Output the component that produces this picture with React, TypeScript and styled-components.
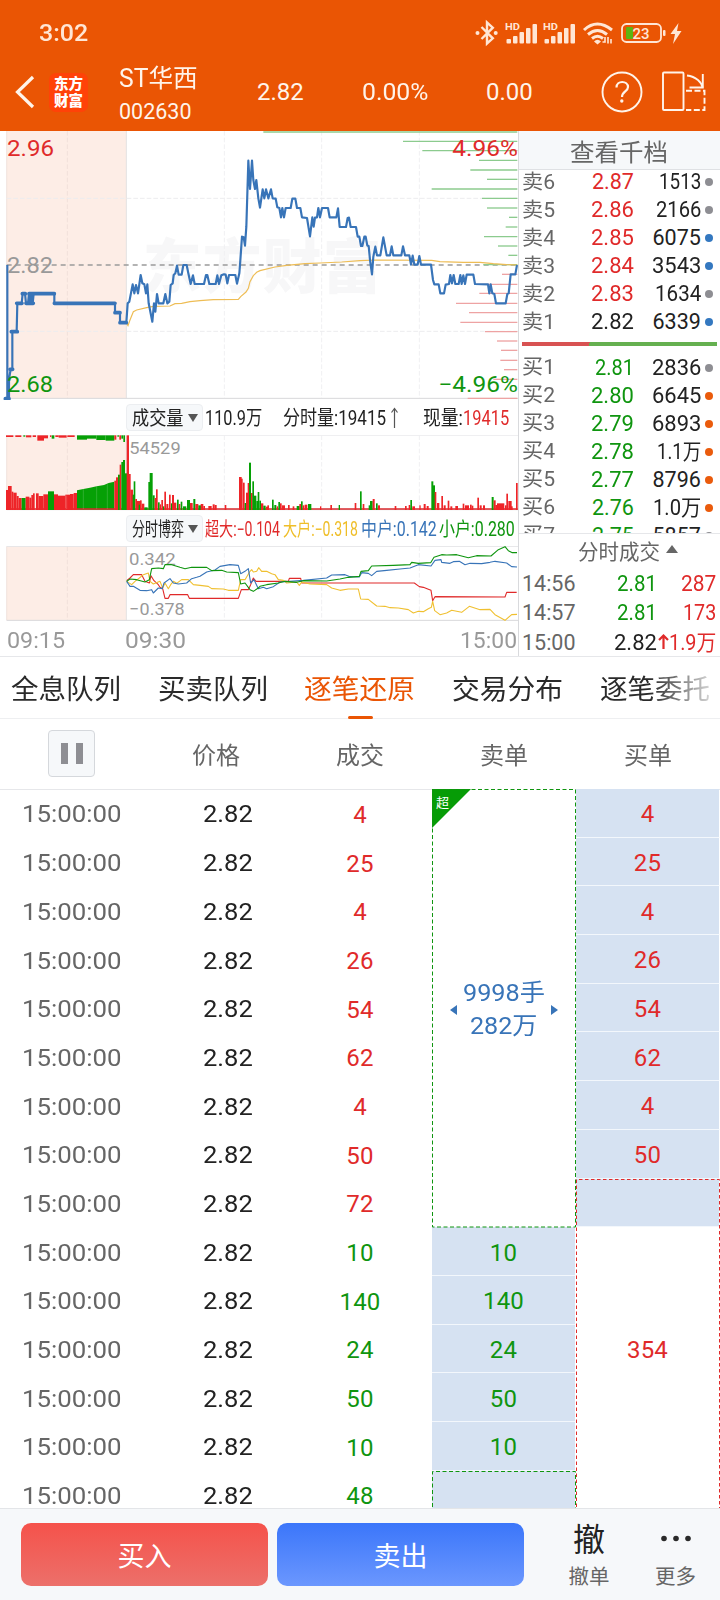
import React, { useLayoutEffect, useRef, useState } from "react";
import styled, { createGlobalStyle } from "styled-components";

const C = {
  orange: "#ea5504",
  red: "#e02a2a",
  green: "#0f950f",
  blue: "#3874b8",
  yellow: "#f0c030",
  ink: "#222222",
  grey: "#666666",
  faint: "#999999",
  line: "#e6e7ea",
  panel: "#f6f8fa",
  cell: "#d6e2f2",
};
const FONT = '"Roboto", "Noto Sans CJK SC", sans-serif';

const Global = createGlobalStyle`
  * { box-sizing: border-box; }
  body { margin: 0; background: #fff; font-family: ${FONT}; color: ${C.ink}; }
`;

/* Text squeezed or stretched horizontally to a given width */
const FitBox = styled.span<{ $w: number; $size: number; $color?: string; $weight?: number; $dy?: number }>`
  display: block;
  flex: none;
  width: ${(p) => p.$w}px;
  font-size: ${(p) => p.$size}px;
  line-height: 1.2;
  height: 1.2em;
  white-space: nowrap;
  font-weight: ${(p) => p.$weight ?? 400};
  transform: translateY(${(p) => p.$dy ?? 0}px);
  ${(p) => (p.$color ? `color: ${p.$color};` : "")}
`;
const FitInner = styled.span`
  display: inline-block;
  transform-origin: 0 50%;
`;
type FitProps = { w: number; size: number; color?: string; weight?: number; dy?: number; children: React.ReactNode };
function Fit(props: FitProps) {
  const ref = useRef<HTMLSpanElement>(null);
  const [k, setK] = useState(1);
  useLayoutEffect(() => {
    if (ref.current) setK(props.w / ref.current.offsetWidth);
  }, [props.w]);
  return (
    <FitBox $w={props.w} $size={props.size} $color={props.color} $weight={props.weight} $dy={props.dy}>
      <FitInner ref={ref} style={{ transform: `scaleX(${k})` }}>
        {props.children}
      </FitInner>
    </FitBox>
  );
}

const Screen = styled.div`
  width: 720px;
  height: 1600px;
  overflow: hidden;
  display: flex;
  flex-direction: column;
  background: #fff;
`;

/* ---------- header ---------- */
const Top = styled.header`
  flex: none;
  height: 131px;
  background: ${C.orange};
  color: #fff4ea;
`;
const StatusBar = styled.div`
  height: 66px;
  padding: 0 36px 0 39px;
  display: flex;
  align-items: center;
  justify-content: space-between;
  color: #ffe6d5;
`;
const NavBar = styled.div`
  height: 52px;
  display: flex;
  align-items: center;
`;
const BackIcon = styled.svg`
  margin-left: 14px;
  flex: none;
`;
const Logo = styled.div`
  flex: none;
  width: 39px;
  height: 39px;
  margin: 0 31px 0 14px;
  border-radius: 7px;
  background: #ff4208;
  color: #fff;
  font: 900 14.5px/17px "Noto Sans CJK SC", sans-serif;
  text-align: center;
  padding-top: 1px;
`;
const Stock = styled.div`
  width: 138px;
  display: flex;
  flex-direction: column;
  gap: 5px;
  padding-top: 5px;
`;
const Quote = styled.div<{ $w: number }>`
  width: ${(p) => p.$w}px;
  padding-top: 1px;
`;

const Signal = ({ x }: { x: number }) => (
  <g transform={`translate(${x} 0)`}>
    <text x="-0.5" y="11" fontSize="9.5" fontWeight="700" textLength="15" lengthAdjust="spacingAndGlyphs">HD</text>
    {[[1, 20], [7.5, 17], [14, 13], [20.5, 9], [27, 5]].map(([bx, by]) => (
      <rect key={bx} x={bx} y={by} width="4.500" height={24.5 - by} rx="1" />
    ))}
  </g>
);
const StatusIcons = () => (
  <svg width="209" height="28" viewBox="0 0 209 28" fill="#ffe6d5" stroke="none">
    <path d="M6.500 8 L17.800 19.300 L12 24.500 V3.500 L17.800 8.700 L6.500 20" fill="none" stroke="#ffe6d5" strokeWidth="2.400" />
    <circle cx="2.500" cy="14" r="2" /><circle cx="20.700" cy="14" r="2" />
    <Signal x={30.5} /><Signal x={68.5} />
    <g fill="none" stroke="#ffe6d5" strokeWidth="3">
      <path d="M109 11 Q122 -1 137 11" /><path d="M113 15.500 Q122.500 7.500 132 15.500" /><path d="M117 19.500 Q122.500 15 128 19.500" />
    </g>
    <path d="M119 22.500 Q122.500 19 126 22.500 L122.500 25.500Z" />
    <path d="M127.500 23H130V18M133 18V24.500M136 20V24.500" stroke="#ffe6d5" strokeWidth="1.6" fill="none" />
    <rect x="147" y="5" width="39" height="18" rx="4.500" fill="none" stroke="#ffe6d5" strokeWidth="1.8" />
    <rect x="151" y="8" width="7" height="12" rx="1" fill="#5cb512" />
    <rect x="188" y="11" width="2.500" height="6" rx="1" />
    <text x="157.500" y="19.500" fontSize="15" fontWeight="500" textLength="17" lengthAdjust="spacingAndGlyphs">23</text>
    <path d="M203.500 4 L195.500 15 H200 L198 25 L206.500 12 H202Z" />
  </svg>
);
const NavIcons = () => (
  <svg width="110" height="44" viewBox="0 0 110 44" fill="none" stroke="#fff4ea" strokeWidth="1.9">
    <circle cx="22" cy="22" r="19.500" />
    <path d="M16.500 17.500c0-7.500 11.500-7 11.500-.5c0 4.500-6 4.500-6 10" strokeWidth="2.200" />
    <circle cx="21.800" cy="31" r="1.700" fill="#fff4ea" stroke="none" />
    <rect x="63" y="2.500" width="20.500" height="37.500" rx="1" />
    <path d="M87 5.500c9 1 15 7 15.500 12" /><path d="M102.800 4V17.500H89.500" />
    <path d="M86 20.700H104.500V40H86" strokeDasharray="6 2.500" />
  </svg>
);

/* ---------- market area ---------- */
const Market = styled.section`
  flex: none;
  height: 526px;
  display: flex;
  border-bottom: 1px solid ${C.line};
`;
const Charts = styled.div`
  width: 518px;
  display: flex;
  flex-direction: column;
`;
const Plot = styled.svg`
  display: block;
  flex: none;
`;
const ToolRow = styled.div<{ $h: number }>`
  height: ${(p) => p.$h}px;
  flex: none;
  padding-left: 126px;
  display: flex;
  align-items: center;
`;
const Picker = styled.div`
  flex: none;
  width: 77px;
  height: 27px;
  padding: 0 4px 0 5px;
  margin-right: 2px;
  display: flex;
  align-items: center;
  justify-content: space-between;
  background: ${C.panel};
  border: 1px solid #eceef1;
  border-radius: 4px;
`;
const Caret = styled.i<{ $up?: boolean }>`
  flex: none;
  border: 5px solid transparent;
  ${(p) => (p.$up ? `border-width: 0 6.5px 8px; border-bottom-color: #666; margin-top: -5px;` : `border-width: 8px 5px 0; border-top-color: #555;`)}
`;
const Gap = styled.span<{ $w: number }>`
  width: ${(p) => p.$w}px;
  flex: none;
`;
const TimeAxis = styled.div`
  flex: 1;
  display: flex;
  align-items: center;
  padding: 3px 1px 0 7px;
`;

const shift = (pts: number[]) => pts.map((v, i) => (i % 2 ? v : v + 780));

const preLine = [22,405,22,806,27,806,27,748,32,718,37,718,37,605,50,605,52,520,65,520,68,491,75,491,78,520,84,520,87,491,90,520,95,491,98,520,101,491,163,491,163,520,345,520,345,548,360,548,360,578,379,578];
const priceLine = [379,578,383,520,388,515,398,463,403,490,408,465,414,490,422,435,427,460,433,463,438,490,442,463,446,520,457,575,462,520,466,545,471,492,476,520,490,520,496,492,502,520,508,515,512,465,518,460,521,435,526,430,531,407,536,434,545,434,550,405,560,405,565,430,572,462,579,436,584,462,612,462,618,435,622,435,628,462,647,462,652,436,657,462,664,436,672,433,677,434,682,460,687,435,706,435,711,461,718,430,720,405,726,320,731,322,735,347,739,290,745,92,750,177,756,92,760,150,765,177,769,150,775,205,780,233,
  ...shift([8,178,13,205,18,178,25,205,33,178,38,205,47,206,52,232,58,234,63,262,67,234,72,262,77,234,92,234,97,206,106,206,111,234,121,234,126,262,141,264,150,319,157,262,161,290,165,263,171,262,175,234,180,262,186,234,204,234,209,262,229,262,234,235,239,291,258,291,263,264,267,263,272,291,288,291,293,320,298,320,303,348,307,348,313,320,317,320,322,347,326,348,330,390,336,433,340,380,346,350,351,376,361,376,370,322,380,376,390,376,395,349,400,376,424,376,429,349,435,376,448,376,453,404,458,377,463,404,473,404,478,378,483,404,513,404,519,450,523,463,536,463,541,490,552,490,557,464,567,462,571,435,576,460,581,435,586,462,596,462,601,435,605,462,610,436,615,462,620,434,640,434,645,462,684,463,688,490,692,463,697,490,703,492,708,520,737,520,742,492,746,490,752,433,766,433,771,405])];
const avgLine = [379,578,384,587,390,570,400,545,410,540,440,533,460,529,510,528,525,521,545,520,570,515,600,512,640,509,715,508,722,500,738,486,745,475,750,455,760,437,770,427,780,422,
  ...shift([45,411,80,406,135,401,180,399,245,396,300,392,350,390,515,391,540,395,610,397,660,397,700,401,740,404,772,405])];
const askDepth = [[6,10],[34,429],[62,487],[91,657],[120,631],[148,681],[177,515],[205,666],[234,681],[262,747],[291,737],[320,672],[348,714],[376,745],[404,670]];
const bidDepth = [[433,726],[463,650],[490,658],[520,588],[548,627],[577,601],[605,675],[633,711],[661,723],[691,721],[719,732],[748,700],[805,623]];

const Grid = ({ top, bottom }: { top: number; bottom: number }) => (
  <g>
    <rect x="20" y={top} width="359" height={bottom - top} fill="#fdede6" />
    <g stroke="#e9e9eb" strokeWidth="3" strokeDasharray="14 6">
      <path d={`M202 ${top}V${bottom}`} stroke="#f1e0da" />
      <path d={`M673 ${top}V${bottom}M965 ${top}V${bottom}M1258 ${top}V${bottom}`} stroke="#f0f0f2" />
    </g>
    <path d={`M379 ${top}V${bottom}`} stroke="#e4e2e2" strokeWidth="3" />
    <path d={`M20 ${top}V${bottom}`} stroke="#ead9d3" strokeWidth="2" />
    <path d={`M20 ${bottom}H1554`} stroke="#d8d8da" strokeWidth="3" />
  </g>
);

type LabelProps = { x: number; y: number; w: number; size: number; fill: string; children: string };
const Label = ({ x, y, w, size, fill, children }: LabelProps) => (
  <text x={x} y={y} textLength={w} lengthAdjust="spacingAndGlyphs" fontSize={size} fill={fill}>{children}</text>
);

const PriceChart = () => (
  <Plot width="518" height="269" viewBox="0 3 1554 807">
    <text x="428" y="475" fontSize="176" fontWeight="900" fill="#f7f7f8" textLength="716">东方财富</text>
    <Grid top={3} bottom={805} />
    <path d="M20 205H1554M20 604H1554" stroke="#ececee" strokeWidth="3" strokeDasharray="14 6" />
    <path d="M20 405H1554" stroke="#9b9b9b" strokeWidth="4" strokeDasharray="15 12" />
    {askDepth.map(([y, x]) => <path key={y} d={`M${x + 780} ${y}H1552`} stroke="#8ccb8e" strokeWidth="4" />)}
    {bidDepth.map(([y, x]) => <path key={y} d={`M${x + 780} ${y}H1552`} stroke="#eea3a3" strokeWidth="4" />)}
    <polyline points={avgLine.join(" ")} fill="none" stroke="#eebd55" strokeWidth="3.500" />
    <polyline points={preLine.join(" ")} fill="none" stroke={C.blue} strokeWidth="6.500" />
    <path d="M101 491H163M163 520H345M345 548H360M360 578H379M16 806H27M34 605H52M50 520H66M67 491H76M78 520H100M87 491H102M30 718H38" stroke={C.blue} strokeWidth="11" strokeLinecap="round" />
    <polyline points={priceLine.join(" ")} fill="none" stroke={C.blue} strokeWidth="6.500" strokeLinejoin="round" />
    <Label x={21} y={77} w={141} size={66} fill={C.red}>2.96</Label>
    <Label x={21} y={430} w={138} size={66} fill={C.faint}>2.82</Label>
    <Label x={21} y={785} w={138} size={66} fill={C.green}>2.68</Label>
    <Label x={1357} y={77} w={197} size={66} fill={C.red}>4.96%</Label>
    <Label x={1315} y={785} w={239} size={66} fill={C.green}>−4.96%</Label>
  </Plot>
);

/* Volume bars: x, width, top (baseline 335), colour */
type Bar = [number, number, number, "r" | "g"];
const volBars: Bar[] = [
  [18,6,276,"r"],[24,11,264,"r"],[35,5,281,"r"],[40,10,284,"r"],[50,6,294,"r"],[56,9,300,"r"],[65,12,300,"g"],[77,11,296,"r"],[88,6,299,"r"],[94,5,291,"r"],[99,5,286,"r"],
  [108,8,286,"r"],[116,14,294,"r"],[130,14,289,"r"],[144,18,280,"g"],[162,12,289,"r"],[174,22,293,"r"],[196,14,290,"r"],[210,11,288,"r"],[221,10,285,"r"],
  [343,5,248,"r"],[348,6,238,"r"],[354,6,230,"g"],[359,5,200,"r"],[364,5,192,"g"],[369,6,186,"g"],[375,6,226,"g"],[380,7,112,"r"],[387,5,228,"r"],
  [391,8,275,"r"],[398,4,290,"g"],[401,5,250,"g"],[406,5,303,"r"],[410,10,309,"r"],[416,5,320,"g"],[420,5,307,"r"],[425,8,317,"r"],[433,10,328,"g"],
  [445,6,252,"g"],[449,9,225,"g"],[458,6,292,"g"],[464,5,300,"r"],[468,5,274,"r"],[474,5,313,"g"],[479,4,319,"r"],[484,5,306,"r"],[489,4,325,"g"],[493,5,281,"r"],[499,6,318,"r"],[507,5,290,"r"],[513,5,316,"g"],[516,6,291,"r"],[522,7,314,"r"],[531,5,305,"g"],[536,5,318,"r"],[542,5,311,"g"],[549,10,325,"g"],[561,9,306,"g"],[570,8,315,"r"],[580,6,303,"g"],[586,9,318,"r"],[595,9,322,"g"],[602,8,318,"r"],[610,5,324,"r"],[625,10,324,"r"],[638,6,319,"r"],[644,6,321,"r"],[674,5,321,"r"],
  [717,8,237,"r"],[723,5,242,"r"],[729,5,254,"r"],[734,5,315,"g"],[738,6,284,"r"],[743,5,255,"r"],[747,6,194,"g"],[753,5,285,"r"],[757,5,250,"g"],[762,7,293,"g"],[769,5,309,"g"],[773,5,282,"g"],[778,5,308,"g"],[783,7,316,"r"],[790,7,323,"g"],[798,6,326,"r"],
  [802,5,322,"r"],[816,5,305,"g"],[823,6,321,"g"],[830,4,325,"r"],[835,5,312,"g"],[840,5,316,"r"],[846,9,322,"r"],[864,5,321,"r"],[878,5,325,"r"],[890,9,324,"g"],[898,5,318,"r"],[903,5,310,"g"],[908,5,322,"r"],[914,8,320,"r"],[924,10,318,"g"],[960,4,325,"r"],[991,5,321,"r"],[1016,4,321,"g"],
  [1064,5,315,"r"],[1080,5,280,"g"],[1088,5,318,"r"],[1106,6,322,"g"],[1110,8,309,"g"],[1118,6,303,"r"],[1128,5,316,"g"],[1134,6,322,"r"],[1184,5,324,"r"],[1215,5,324,"r"],[1226,5,321,"r"],[1231,5,306,"g"],[1237,8,325,"r"],
  [1258,4,322,"r"],[1271,6,318,"r"],[1280,6,324,"r"],[1294,6,250,"g"],[1299,6,262,"g"],[1304,5,282,"r"],[1311,7,315,"r"],[1324,5,294,"r"],[1331,6,322,"r"],[1343,5,308,"r"],[1351,6,325,"r"],[1366,8,324,"r"],[1388,5,317,"r"],[1395,12,322,"r"],[1410,5,320,"r"],[1415,5,323,"r"],[1432,5,299,"r"],[1439,6,322,"r"],[1449,6,322,"r"],[1475,6,297,"g"],[1481,6,307,"r"],[1486,10,321,"r"],[1491,22,316,"r"],[1515,5,322,"r"],[1519,5,287,"r"],[1525,10,309,"r"],[1533,5,325,"r"],[1548,5,255,"r"],
];
const hangBars: Bar[] = [
  [18,22,117,"r"],[46,18,117,"r"],[70,6,116,"g"],[78,16,118,"r"],[98,10,117,"r"],[112,20,128,"r"],[132,12,121,"r"],[150,4,117,"r"],[155,8,122,"g"],[166,10,117,"r"],[176,24,119,"r"],[202,22,117,"r"],[231,30,125,"g"],[261,28,122,"g"],[289,28,126,"g"],[317,26,128,"g"],[343,6,125,"r"],[352,5,116,"g"],[358,5,125,"r"],[364,5,122,"g"],[370,5,132,"g"],
];
const barFill = { r: "#ee2428", g: "#06a006" };

const VolumeChart = () => (
  <Plot width="518" height="76" viewBox="0 111 1554 228">
    <Grid top={112} bottom={335} />
    <path d="M20 112H1554" stroke="#ececee" strokeWidth="3" />
    {hangBars.map(([x, w, y, c]) => <rect key={x} x={x} y={112} width={w} height={y - 112} fill={barFill[c]} />)}
    <polygon points="231,335 231,277 250,273 270,269 290,265 312,261 326,255 343,251 343,335" fill={barFill.g} />
    <path d="M20 333H1553" stroke="#d8282c" strokeWidth="5" />
    {volBars.map(([x, w, y, c]) => <rect key={x} x={x} y={y} width={w} height={336 - y} fill={barFill[c]} />)}
    <path d="M250 273V333M290 265V333M322 259V333M200 292V333" stroke="#fff" strokeOpacity=".25" strokeWidth="2" />
    <Label x={388} y={168} w={154} size={51} fill={C.faint}>54529</Label>
  </Plot>
);

const flowLines: [string, number[]][] = [
  [C.red, [380,548,390,540,400,530,425,530,435,550,448,555,453,533,462,548,475,560,480,568,488,572,495,601,505,601,510,590,563,590,568,601,715,601,724,575,745,575,752,560,760,540,768,550,...shift([0,550,85,550,88,541,122,541,125,555,463,555,478,566,490,568,505,574,513,577,518,608,525,596,735,597,740,583,770,583])]],
  [C.yellow, [380,550,395,560,405,550,418,540,430,530,445,525,450,550,460,558,480,550,488,570,495,555,505,572,512,560,520,550,530,556,545,545,565,545,580,560,600,562,625,565,635,572,670,573,685,577,715,577,722,545,735,545,750,520,755,515,760,522,770,520,776,509,...shift([5,520,20,520,35,527,45,530,55,545,70,547,80,555,110,552,118,562,125,552,150,558,200,560,215,570,240,577,265,573,295,573,302,603,325,604,350,624,375,625,390,629,415,630,445,635,460,645,475,640,490,641,505,632,514,628,518,610,524,638,540,650,560,645,575,637,605,643,628,625,660,635,690,634,705,650,735,667,755,650,771,649])]],
  [C.blue, [380,550,390,565,400,565,420,577,440,578,455,575,460,585,475,570,487,572,492,555,510,542,520,555,535,558,560,555,575,542,590,538,600,535,620,522,645,516,660,505,690,500,715,502,722,527,735,520,745,512,752,555,762,545,775,572,...shift([10,568,20,572,40,566,60,552,90,550,130,547,200,540,215,531,255,530,270,536,298,537,305,524,325,526,335,533,350,520,380,517,420,513,450,510,475,500,513,504,525,487,543,485,545,493,570,496,580,491,598,490,615,500,630,496,665,497,690,493,705,490,740,495,755,506,771,507])]],
  [C.green, [380,550,390,543,410,545,435,552,448,545,455,512,475,510,490,512,495,500,515,500,540,508,555,512,575,508,620,508,635,518,665,517,680,522,715,524,722,558,735,555,750,575,760,580,775,570,...shift([0,565,20,560,55,555,75,550,110,553,130,548,200,549,240,543,265,538,298,535,303,520,325,518,335,504,400,502,450,500,455,493,475,496,512,494,522,478,545,470,560,471,590,470,625,479,650,473,693,474,715,455,735,446,745,458,757,464,771,464])]],
];
const FlowChart = () => (
  <Plot width="518" height="75" viewBox="0 444 1554 225">
    <Grid top={445} bottom={667} />
    <path d="M20 445H1554" stroke="#e4e4e6" strokeWidth="3" />
    <Label x={387} y={500} w={140} size={51} fill={C.faint}>0.342</Label>
    <Label x={388} y={652} w={166} size={51} fill={C.faint}>−0.378</Label>
    {flowLines.map(([c, pts]) => <polyline key={c} points={pts.join(" ")} fill="none" stroke={c} strokeWidth="3.300" strokeLinejoin="round" />)}
  </Plot>
);

/* ---------- order book ---------- */
const Book = styled.aside`
  width: 202px;
  display: flex;
  flex-direction: column;
  border-left: 1px solid #d9dadd;
`;
const BookTitle = styled.div`
  flex: none;
  height: 39px;
  display: flex;
  align-items: center;
  justify-content: center;
  padding-right: 2px;
  background: ${C.panel};
  border-bottom: 1px solid #dfe1e4;
`;
const Levels = styled.div`
  flex: none;
  height: 364px;
  overflow: hidden;
  border-bottom: 1px solid ${C.line};
`;
const LevelGroup = styled.div`
  margin-top: -2px;
`;
const Level = styled.div`
  height: 28px;
  display: grid;
  grid-template-columns: 33px 79px 66.5px 8px;
  padding-left: 3px;
  align-items: center;
  justify-items: end;
`;
const Dot = styled.i<{ $c: string }>`
  width: 8px;
  height: 8px;
  margin-right: -4px;
  border-radius: 50%;
  background: ${(p) => p.$c};
`;
const Ratio = styled.div`
  height: 4px;
  margin: 5.500px 3px 8px 3px;
  background: linear-gradient(110deg, #d85252 34.500%, #65b050 34.600%);
`;
const DealTitle = styled.div`
  height: 35px;
  flex: none;
  display: flex;
  align-items: center;
  gap: 6px;
  padding-left: 59px;
`;
const Deal = styled.div`
  height: 29.400px;
  flex: none;
  display: grid;
  grid-template-columns: 54px 81px 59px;
  padding-left: 3px;
  align-items: center;
  justify-items: end;
`;
const DealVol = styled.div`
  display: flex;
  align-items: center;
`;

const G = "#8e8e93", B = "#3478c0", O = "#ea5b0c";
type Lv = [string, string, number, string, number, string];
const sells: Lv[] = [
  ["卖6", "2.87", 42, "1513", 42, G], ["卖5", "2.86", 43, "2166", 45, G], ["卖4", "2.85", 43, "6075", 48, B],
  ["卖3", "2.84", 43, "3543", 49, B], ["卖2", "2.83", 43, "1634", 46, G], ["卖1", "2.82", 43, "6339", 48, B],
];
const buys: Lv[] = [
  ["买1", "2.81", 39, "2836", 49, G], ["买2", "2.80", 43, "6645", 49, O], ["买3", "2.79", 43, "6893", 49, O],
  ["买4", "2.78", 43, "1.1万", 44, O], ["买5", "2.77", 43, "8796", 48, O], ["买6", "2.76", 42, "1.0万", 48, O], ["买7", "2.75", 42, "5857", 48, G],
];
const LevelRow = ({ d, color }: { d: Lv; color: string }) => (
  <Level>
    <Fit w={33} size={20.5} color={C.grey}>{d[0]}</Fit>
    <Fit w={d[2]} size={21.5} color={color}>{d[1]}</Fit>
    <Fit w={d[4]} size={21.5}>{d[3]}</Fit>
    <Dot $c={d[5]} />
  </Level>
);

/* ---------- tabs ---------- */
const Tabs = styled.nav`
  flex: none;
  height: 62px;
  display: flex;
  padding-left: 11px;
  gap: 36.700px;
  border-bottom: 1px solid #eeeff1;
`;
const Tab = styled.div<{ $active?: boolean; $fade?: boolean }>`
  position: relative;
  flex: none;
  display: flex;
  align-items: center;
  padding-top: 5px;
  color: ${(p) => (p.$active ? C.orange : "#2a2a2a")};
  ${(p) => p.$fade && `mask-image: linear-gradient(90deg, #000 45%, rgba(0,0,0,.2) 100%);`}
  &::after {
    content: "";
    display: ${(p) => (p.$active ? "block" : "none")};
    position: absolute;
    left: 43.500px;
    bottom: -1px;
    width: 25px;
    height: 3.500px;
    border-radius: 2px;
    background: ${C.orange};
  }
`;

/* ---------- tick table ---------- */
const HeadRow = styled.div`
  flex: none;
  height: 71px;
  display: grid;
  grid-template-columns: repeat(5, 144px);
  align-items: center;
  justify-items: center;
  border-bottom: 1px solid ${C.line};
`;
const Pause = styled.div`
  width: 47px;
  height: 47px;
  margin: 0 1px 2px 0;
  display: flex;
  align-items: center;
  justify-content: center;
  gap: 8px;
  background: ${C.panel};
  border: 1px solid #d5d8dc;
  border-radius: 4px;
  & i {
    width: 7px;
    height: 21px;
    background: #8e8e93;
  }
`;
const Body = styled.div`
  flex: none;
  height: 719px;
  margin-top: -1px;
  overflow: hidden;
  display: grid;
  grid-template-columns: 432px 144px 144px;
  align-items: start;
`;
const Tick = styled.div`
  height: 48.700px;
  padding-top: 3px;
  display: grid;
  grid-template-columns: 144px 144px 144px;
  align-items: center;
  justify-items: center;
`;
const PriceCell = styled.div`
  padding-left: 24px;
`;
const Num = styled.div<{ $c: string }>`
  font-size: 24px;
  letter-spacing: 0.2px;
  color: ${(p) => p.$c};
`;
const Merged = styled.div<{ $span: number; $fill?: boolean }>`
  position: relative;
  height: ${(p) => p.$span * 48.7}px;
  padding-top: 3px;
  display: flex;
  flex-direction: column;
  align-items: center;
  justify-content: center;
  background: ${(p) => (p.$fill ? C.cell : "#fff")};
  border-right: 1px solid transparent;
  border-bottom: ${(p) => (p.$fill ? "1px solid #f3f7fc" : "0")};
  background-clip: padding-box;
`;
const Frame = styled.svg`
  position: absolute;
  left: 0;
  top: 0;
  z-index: 1;
  overflow: visible;
`;
const Corner = styled.div`
  position: absolute;
  left: 0;
  top: 0;
  width: 39px;
  height: 39px;
  background: #069c06;
  clip-path: polygon(0 0, 100% 0, 0 100%);
  color: #fff;
  font-size: 13px;
  line-height: 28px;
  padding-left: 4px;
`;
const BigOrder = styled.div`
  display: flex;
  align-items: center;
  gap: 5px;
  color: ${C.blue};
`;
const BigText = styled.div`
  width: 84px;
  display: flex;
  flex-direction: column;
  align-items: center;
  gap: 4px;
`;
const Side = styled.i<{ $right?: boolean }>`
  border: 5px solid transparent;
  ${(p) => (p.$right ? `border-width: 5px 0 5px 7px; border-left-color: ${C.blue};` : `border-width: 5px 7px 5px 0; border-right-color: ${C.blue};`)}
`;

const ticks: [number, "r" | "g"][] = [
  [4, "r"], [25, "r"], [4, "r"], [26, "r"], [54, "r"], [62, "r"], [4, "r"], [50, "r"], [72, "r"],
  [10, "g"], [140, "g"], [24, "g"], [50, "g"], [10, "g"], [48, "g"],
];
const dealColor = { r: C.red, g: C.green };

/* ---------- footer ---------- */
const Footer = styled.footer`
  flex: 1;
  display: flex;
  padding: 14px 0 0 21px;
  background: ${C.panel};
  border-top: 1px solid #e3e5e8;
`;
const Trade = styled.button<{ $from: string; $to: string }>`
  width: 247px;
  height: 63px;
  margin: 0 9px 0 0;
  padding: 3px 0 0;
  border: 0;
  border-radius: 10px;
  display: flex;
  align-items: center;
  justify-content: center;
  color: #fff;
  font-family: ${FONT};
  background: linear-gradient(${(p) => p.$from}, ${(p) => p.$to});
`;
const Action = styled.div<{ $w: number }>`
  width: ${(p) => p.$w}px;
  display: flex;
  flex-direction: column;
  align-items: center;
`;
const ActionIcon = styled.div`
  height: 42px;
  margin-top: -2px;
  display: flex;
  align-items: flex-start;
`;

export default function App() {
  return (
    <Screen>
      <Global />
      <Top>
        <StatusBar>
          <Fit w={49} size={24} weight={500}>3:02</Fit>
          <StatusIcons />
        </StatusBar>
        <NavBar>
          <BackIcon width="21" height="34" viewBox="0 0 21 34" fill="none" stroke="#fff4ea" strokeWidth="3.200">
            <path d="M19 2 L3.500 17 L19 32" />
          </BackIcon>
          <Logo>东方<br />财富</Logo>
          <Stock>
            <Fit w={79} size={25}>ST华西</Fit>
            <Fit w={73} size={21.5}>002630</Fit>
          </Stock>
          <Quote $w={105}><Fit w={47} size={24}>2.82</Fit></Quote>
          <Quote $w={124}><Fit w={66} size={24}>0.00%</Fit></Quote>
          <Quote $w={114}><Fit w={47} size={24}>0.00</Fit></Quote>
          <NavIcons />
        </NavBar>
      </Top>

      <Market>
        <Charts>
          <PriceChart />
          <ToolRow $h={35}>
            <Picker><Fit w={52} size={19.5} dy={1}>成交量</Fit><Caret /></Picker>
            <Fit w={57} size={20}>110.9万</Fit>
            <Gap $w={21} />
            <Fit w={103} size={20}>分时量:19415</Fit>
            <Gap $w={4} />
            <svg width="9" height="22" viewBox="0 0 9 22" fill="none" stroke="#555" strokeWidth="1.200"><path d="M4.500 21V1.500M1.500 5.500L4.500 1.500L7.500 5.500" /></svg>
            <Gap $w={24} />
            <Fit w={40} size={20}>现量:</Fit>
            <Fit w={46} size={20} color={C.red}>19415</Fit>
          </ToolRow>
          <VolumeChart />
          <ToolRow $h={35}>
            <Picker><Fit w={52} size={19.5} dy={1}>分时博弈</Fit><Caret /></Picker>
            <Fit w={75} size={19.5} dy={1} color={C.red}>超大:−0.104</Fit>
            <Gap $w={3} />
            <Fit w={75} size={19.5} dy={1} color="#efbe28">大户:−0.318</Fit>
            <Gap $w={3} />
            <Fit w={76} size={19.5} dy={1} color={C.blue}>中户:0.142</Fit>
            <Gap $w={2} />
            <Fit w={76} size={19.5} dy={1} color={C.green}>小户:0.280</Fit>
          </ToolRow>
          <FlowChart />
          <TimeAxis>
            <Fit w={58} size={22.5} color={C.faint}>09:15</Fit>
            <Gap $w={60} />
            <Fit w={61} size={22.5} color={C.faint}>09:30</Fit>
            <Gap $w={274} />
            <Fit w={57} size={22.5} color={C.faint}>15:00</Fit>
          </TimeAxis>
        </Charts>

        <Book>
          <BookTitle><Fit w={98} size={24} dy={3} color={C.grey}>查看千档</Fit></BookTitle>
          <Levels>
            <LevelGroup>
              {sells.map((d) => <LevelRow key={d[0]} d={d} color={d[1] === "2.82" ? C.ink : C.red} />)}
              <Ratio />
              {buys.map((d) => <LevelRow key={d[0]} d={d} color={C.green} />)}
            </LevelGroup>
          </Levels>
          <DealTitle><Fit w={82} size={21} dy={1} color={C.grey}>分时成交</Fit><Caret $up /></DealTitle>
          <Deal><Fit w={54} size={21.5} color={C.grey}>14:56</Fit><Fit w={40} size={21.5} color={C.green}>2.81</Fit><Fit w={35} size={21.5} color={C.red}>287</Fit></Deal>
          <Deal><Fit w={54} size={21.5} color={C.grey}>14:57</Fit><Fit w={40} size={21.5} color={C.green}>2.81</Fit><Fit w={33} size={21.5} color={C.red}>173</Fit></Deal>
          <Deal>
            <Fit w={54} size={21.5} color={C.grey}>15:00</Fit><Fit w={43} size={21.5}>2.82</Fit>
            <DealVol>
              <svg width="11" height="18" viewBox="0 0 11 18" fill="none" stroke={C.red} strokeWidth="2.200"><path d="M5.500 16V3M1 7L5.500 2.500L10 7" /></svg>
              <Fit w={47} size={21.5} color={C.red}>1.9万</Fit>
            </DealVol>
          </Deal>
        </Book>
      </Market>

      <Tabs>
        <Tab><Fit w={110} size={27}>全息队列</Fit></Tab>
        <Tab><Fit w={110} size={27}>买卖队列</Fit></Tab>
        <Tab $active><Fit w={111} size={27}>逐笔还原</Fit></Tab>
        <Tab><Fit w={111} size={27}>交易分布</Fit></Tab>
        <Tab $fade><Fit w={110} size={27}>逐笔委托</Fit></Tab>
      </Tabs>

      <HeadRow>
        <Pause><i /><i /></Pause>
        {["价格", "成交", "卖单", "买单"].map((t) => <Fit key={t} w={48} size={23.5} dy={1.5} color={C.grey}>{t}</Fit>)}
      </HeadRow>

      <Body>
        <div>
          {ticks.map(([n, c], i) => (
            <Tick key={i}>
              <Fit w={100} size={24} color={C.grey}>15:00:00</Fit>
              <PriceCell><Fit w={50} size={24}>2.82</Fit></PriceCell>
              <Num $c={dealColor[c]}>{n}</Num>
            </Tick>
          ))}
        </div>
        <div>
          <Merged $span={9}>
            <Corner>超</Corner>
            <Frame width="144" height="439" fill="none" stroke={C.green}><rect x=".5" y=".5" width="143" height="437.500" strokeDasharray="4 2.500" /></Frame>
            <BigOrder>
              <Side />
              <BigText><Fit w={82} size={24}>9998手</Fit><Fit w={67} size={24}>282万</Fit></BigText>
              <Side $right />
            </BigOrder>
          </Merged>
          {ticks.slice(9, 14).map(([n], i) => <Merged key={i} $span={1} $fill><Num $c={C.green}>{n}</Num></Merged>)}
          <Merged $span={1} $fill>
            <Frame width="144" height="49" fill="none" stroke={C.green}><path d="M.5 49V.5H143.500V49" strokeDasharray="4 2.500" /></Frame>
          </Merged>
        </div>
        <div>
          {ticks.slice(0, 8).map(([n], i) => <Merged key={i} $span={1} $fill><Num $c={C.red}>{n}</Num></Merged>)}
          <Merged $span={1} $fill>
            <Frame width="144" height="340" fill="none" stroke={C.red}><path d="M.5 340V.5H143.500V340" strokeDasharray="3.500 2.500" /></Frame>
          </Merged>
          <Merged $span={5}><Num $c={C.red}>354</Num></Merged>
        </div>
      </Body>

      <Footer>
        <Trade $from="#f5524b" $to="#ec706a"><Fit w={54} size={27} dy={1}>买入</Fit></Trade>
        <Trade $from="#3b76fa" $to="#6b97fe"><Fit w={54} size={27} dy={1}>卖出</Fit></Trade>
        <Action $w={112}>
          <ActionIcon><Fit w={32} size={32}>撤</Fit></ActionIcon>
          <Fit w={41} size={20.5} dy={2} color={C.grey}>撤单</Fit>
        </Action>
        <Action $w={61}>
          <ActionIcon>
            <svg width="32" height="36" viewBox="0 0 32 36" fill="#2a2a2a"><circle cx="4" cy="17.500" r="2.800" /><circle cx="16" cy="17.500" r="2.800" /><circle cx="28" cy="17.500" r="2.800" /></svg>
          </ActionIcon>
          <Fit w={41} size={20.5} dy={2} color={C.grey}>更多</Fit>
        </Action>
      </Footer>
    </Screen>
  );
}
